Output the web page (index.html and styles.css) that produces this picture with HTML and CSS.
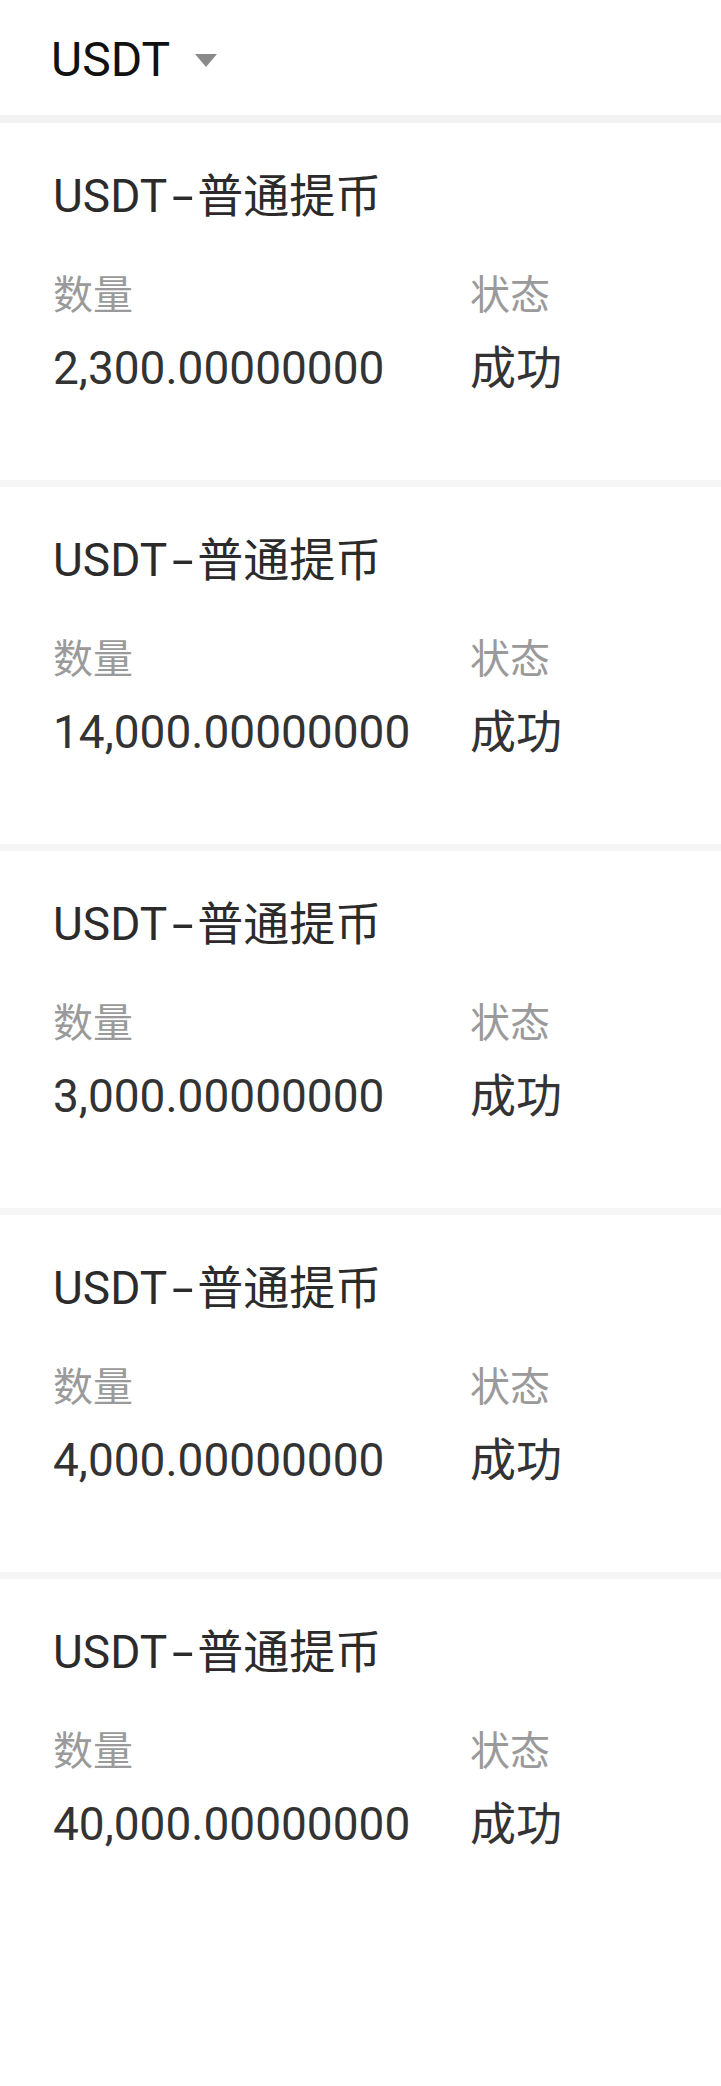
FILE: index.html
```html
<!DOCTYPE html>
<html>
  <head>
    <meta charset="utf-8" />
    <title>提币记录</title>
    <link rel="stylesheet" href="styles.css">
  </head>
  <body>
    <div class="page">
      <div class="topbar">
        <span class="coin_name">USDT</span>
        <span class="arrow"></span>
      </div>

      <ul class="records">
        <li class="record">
          <h3 class="record_title">USDT<span class="dash">-</span>普通提币</h3>
          <div class="record_row">
            <div class="col_amount">
              <p class="label">数量</p>
              <p class="value">2,300.00000000</p>
            </div>
            <div class="col_status">
              <p class="label">状态</p>
              <p class="value">成功</p>
            </div>
          </div>
        </li>
        <li class="record">
          <h3 class="record_title">USDT<span class="dash">-</span>普通提币</h3>
          <div class="record_row">
            <div class="col_amount">
              <p class="label">数量</p>
              <p class="value">14,000.00000000</p>
            </div>
            <div class="col_status">
              <p class="label">状态</p>
              <p class="value">成功</p>
            </div>
          </div>
        </li>
        <li class="record">
          <h3 class="record_title">USDT<span class="dash">-</span>普通提币</h3>
          <div class="record_row">
            <div class="col_amount">
              <p class="label">数量</p>
              <p class="value">3,000.00000000</p>
            </div>
            <div class="col_status">
              <p class="label">状态</p>
              <p class="value">成功</p>
            </div>
          </div>
        </li>
        <li class="record">
          <h3 class="record_title">USDT<span class="dash">-</span>普通提币</h3>
          <div class="record_row">
            <div class="col_amount">
              <p class="label">数量</p>
              <p class="value">4,000.00000000</p>
            </div>
            <div class="col_status">
              <p class="label">状态</p>
              <p class="value">成功</p>
            </div>
          </div>
        </li>
        <li class="record">
          <h3 class="record_title">USDT<span class="dash">-</span>普通提币</h3>
          <div class="record_row">
            <div class="col_amount">
              <p class="label">数量</p>
              <p class="value">40,000.00000000</p>
            </div>
            <div class="col_status">
              <p class="label">状态</p>
              <p class="value">成功</p>
            </div>
          </div>
        </li>
      </ul>
    </div>
  </body>
</html>
```

FILE: styles.css
```css
* {
  margin: 0px;
  padding: 0px;
  box-sizing: border-box;
}

body {
  background: #ffffff;
  font-family: Roboto, "Noto Sans CJK SC", sans-serif;
  color: #333333;
}

.page {
  width: 721px;
}

.topbar {
  height: 123px;
  display: flex;
  align-items: flex-start;
  padding: 31px 0px 0px 51px;
  border-bottom: 8px solid #f3f3f3;
}

.coin_name {
  font-size: 48px;
  line-height: 58px;
  color: #111111;
}

.arrow {
  width: 0px;
  height: 0px;
  margin: 23px 0px 0px 25px;
  border-left: 11px solid transparent;
  border-right: 11px solid transparent;
  border-top: 13px solid #8a8a8a;
}

.records {
  list-style-type: none;
}

.record {
  height: 364px;
  padding: 43px 0px 0px 53px;
  border-bottom: 7px solid #f6f6f6;
}

.record:last-child {
  border-bottom: none;
}

.record_title {
  font-size: 46px;
  font-weight: normal;
  line-height: 60px;
  color: #2b2b2b;
}

.dash {
  display: inline-block;
  width: 30px;
  padding-left: 3px;
  transform: scaleX(1.7);
  transform-origin: left center;
}

.record_row {
  display: flex;
  margin-top: 45px;
}

.col_amount {
  width: 417px;
}

.label {
  font-size: 40px;
  line-height: 50px;
  color: #9a9a9a;
}

.value {
  margin-top: 22px;
  font-size: 46px;
  line-height: 50px;
  color: #333333;
}
```
